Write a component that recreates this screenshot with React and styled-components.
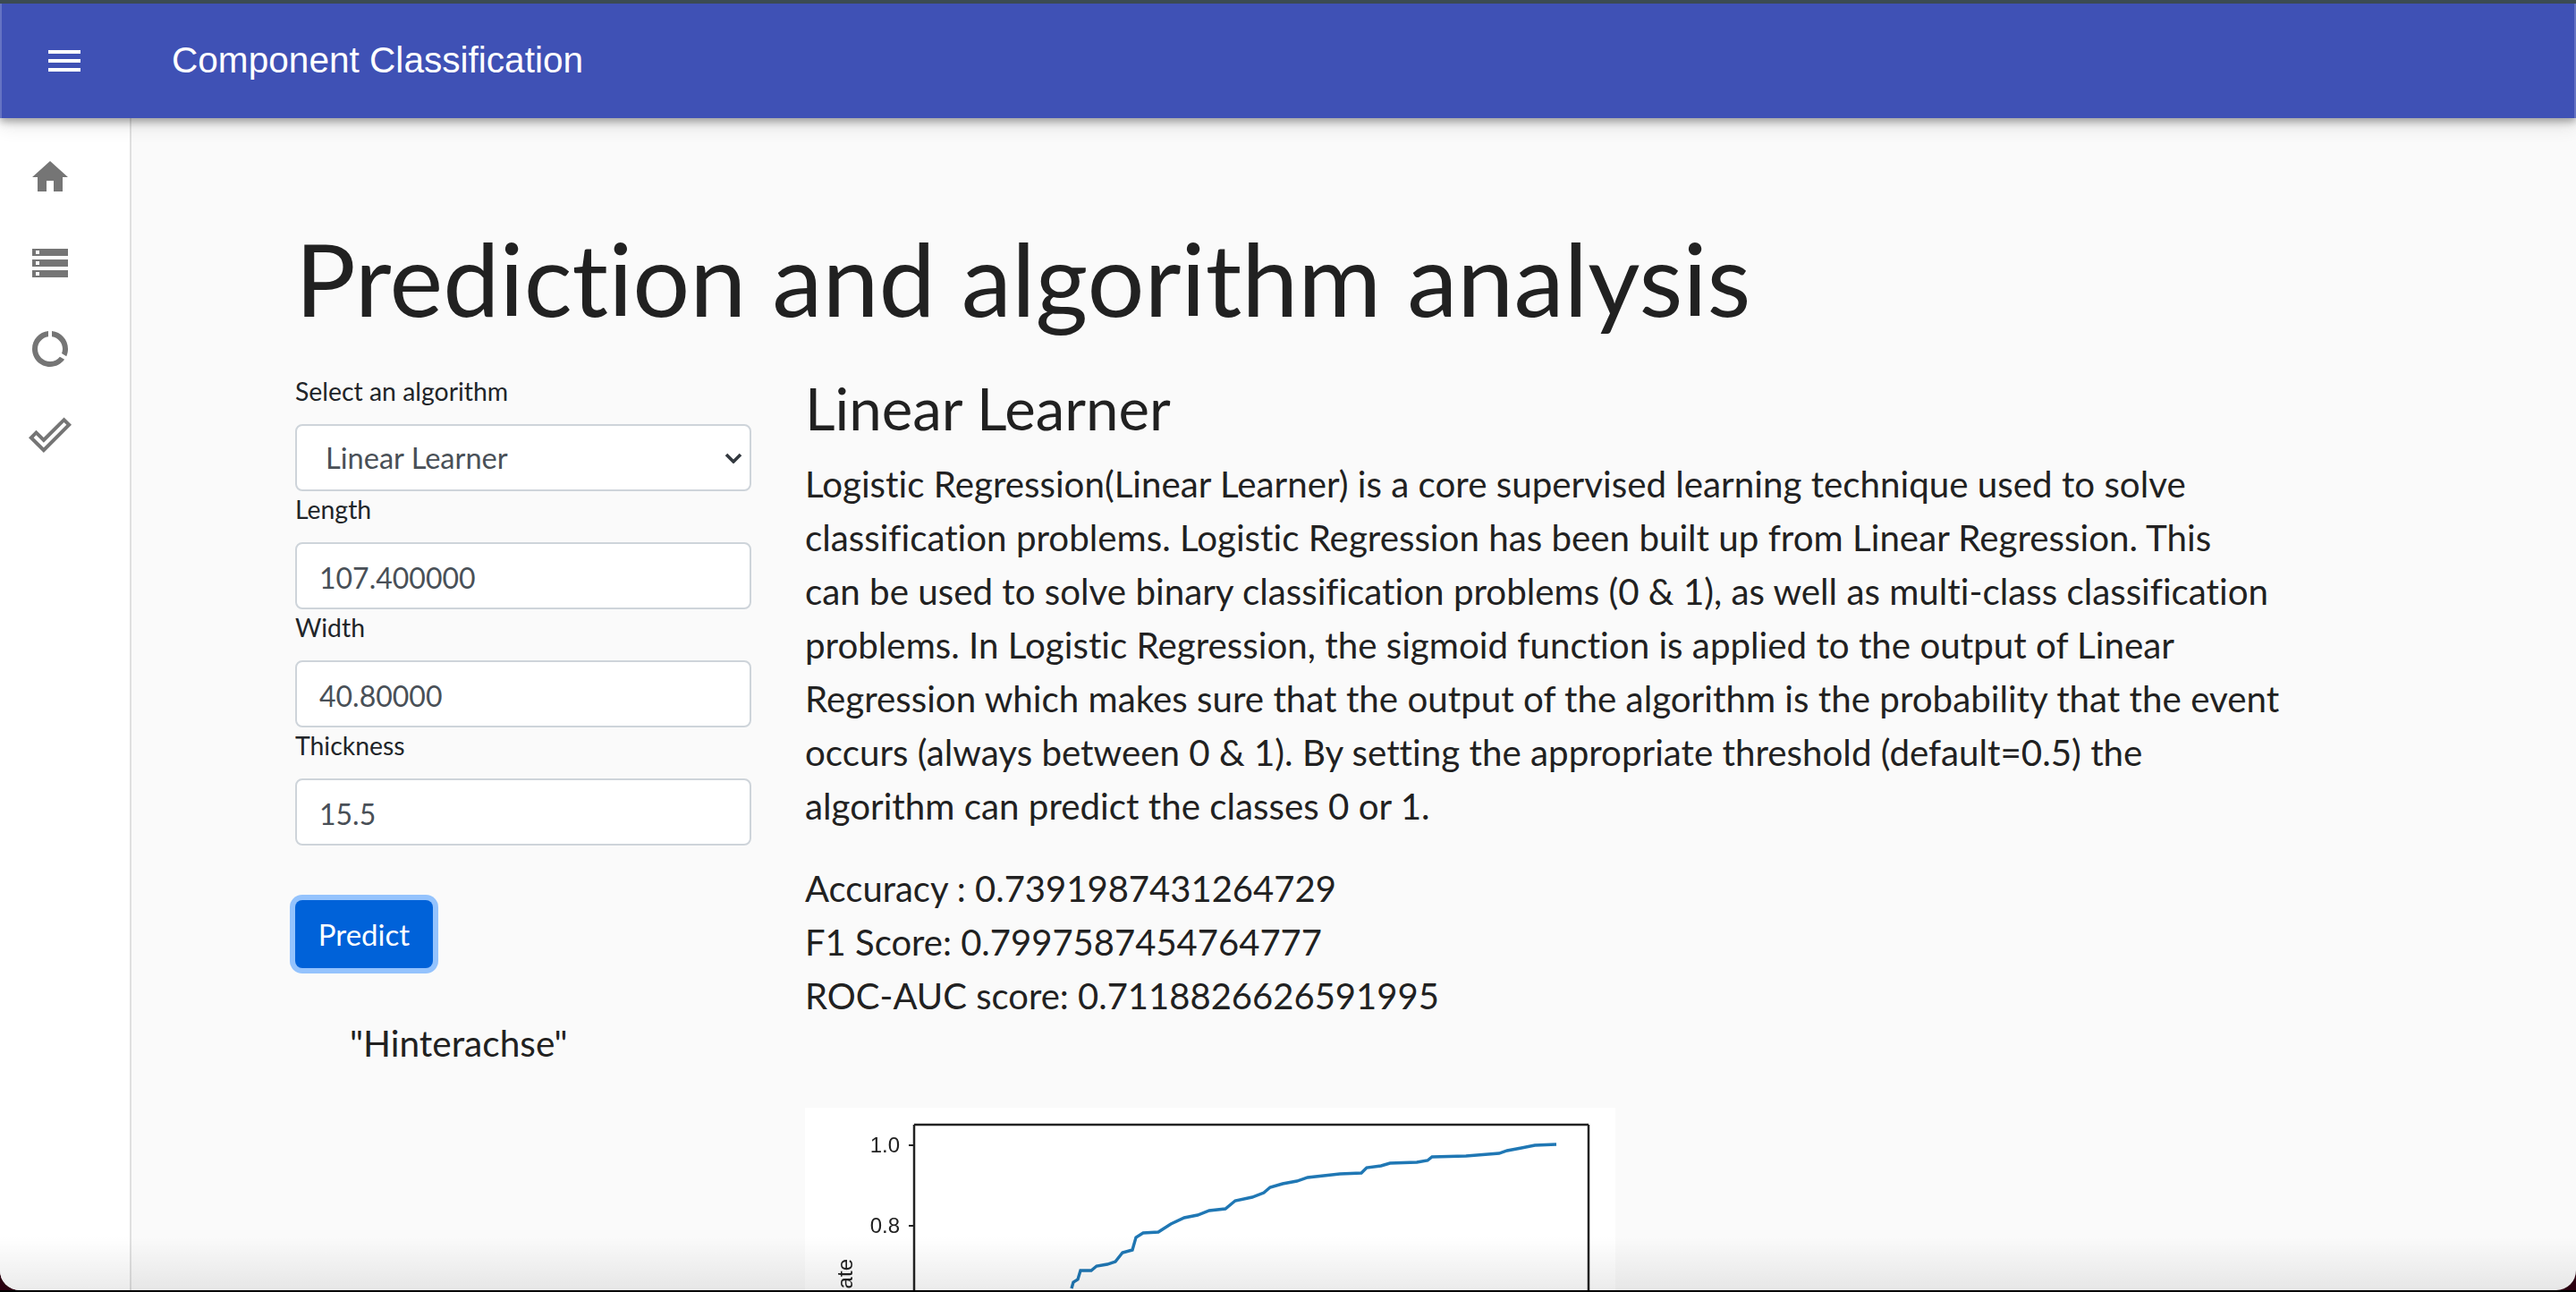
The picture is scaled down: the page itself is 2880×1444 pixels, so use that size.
import React from 'react';
import styled, { createGlobalStyle } from 'styled-components';
import { MdHome, MdStorage, MdDataUsage, MdDoneOutline } from 'react-icons/md';

const GlobalStyle = createGlobalStyle`
  html, body {
    margin: 0;
    padding: 0;
    height: 100%;
    background: #2b0010;
    overflow: hidden;
  }
  * {
    box-sizing: border-box;
  }
`;

const descriptionLines = [
  'Logistic Regression(Linear Learner) is a core supervised learning technique used to solve',
  'classification problems. Logistic Regression has been built up from Linear Regression. This',
  'can be used to solve binary classification problems (0 & 1), as well as multi-class classification',
  'problems. In Logistic Regression, the sigmoid function is applied to the output of Linear',
  'Regression which makes sure that the output of the algorithm is the probability that the event',
  'occurs (always between 0 & 1). By setting the appropriate threshold (default=0.5) the',
  'algorithm can predict the classes 0 or 1.',
];

const fields = [
  { label: 'Length', value: '107.400000' },
  { label: 'Width', value: '40.80000' },
  { label: 'Thickness', value: '15.5' },
];

const scores = [
  'Accuracy : 0.7391987431264729',
  'F1 Score: 0.7997587454764777',
  'ROC-AUC score: 0.7118826626591995',
];

const curve =
  '298,202 300,195 305,192 308,182 320,182 326,177 338,175 347,172 355,162 366,159 370,145 378,140 395,139 409,130 424,123 439,120 452,115 470,113 481,104 500,100 513,95 520,89 534,85 550,82 562,78 580,76 598,74 622,73 628,67 644,65 654,62 684,61 696,59 701,55 739,54 776,51 785,48 801,45 816,42 840,41';

const chevron =
  "url(\"data:image/svg+xml,%3Csvg xmlns='http://www.w3.org/2000/svg' viewBox='0 0 20 12'%3E%3Cpath d='M2 2l8 8 8-8' fill='none' stroke='%23343a40' stroke-width='3.6'/%3E%3C/svg%3E\")";

const App = () => {
  return (
    <Frame>
      <GlobalStyle />
      <Screen>
        <AppBar>
          <MenuIcon viewBox="0 0 36 24">
            <path d="M0 0h36v4H0zM0 10h36v4H0zM0 20h36v4H0z" />
          </MenuIcon>
          <AppTitle>Component Classification</AppTitle>
        </AppBar>
        <Body>
          <Sidebar>
            <NavItem><MdHome /></NavItem>
            <NavItem><MdStorage /></NavItem>
            <NavItem><MdDataUsage /></NavItem>
            <NavItem><MdDoneOutline /></NavItem>
          </Sidebar>
          <Main>
            <PageTitle>Prediction and algorithm analysis</PageTitle>
            <Columns>
              <FormColumn>
                <FieldLabel>Select an algorithm</FieldLabel>
                <Select defaultValue="Linear Learner">
                  <option>Linear Learner</option>
                </Select>
                {fields.map((field) => (
                  <React.Fragment key={field.label}>
                    <FieldLabel>{field.label}</FieldLabel>
                    <Input defaultValue={field.value} />
                  </React.Fragment>
                ))}
                <PredictButton>Predict</PredictButton>
                <Result>"Hinterachse"</Result>
              </FormColumn>
              <DetailColumn>
                <AlgorithmTitle>Linear Learner</AlgorithmTitle>
                <Description>
                  {descriptionLines.map((line) => (
                    <span key={line}>{line}</span>
                  ))}
                </Description>
                <Scores>
                  {scores.map((score) => (
                    <div key={score}>{score}</div>
                  ))}
                </Scores>
                <Plot viewBox="0 0 906 300">
                  <rect width="906" height="300" fill="#fff" />
                  <path d="M122 19H876M122 19V300M876 19V300" fill="none" stroke="#222" strokeWidth="2.5" />
                  <path d="M116 42h6M116 132h6" stroke="#222" strokeWidth="2" />
                  <PlotLabel x="106" y="50" textAnchor="end">1.0</PlotLabel>
                  <PlotLabel x="106" y="140" textAnchor="end">0.8</PlotLabel>
                  <PlotLabel x="-169" y="53" textAnchor="end" transform="rotate(-90)">ate</PlotLabel>
                  <polyline points={curve} fill="none" stroke="#1f77b4" strokeWidth="3.4" />
                </Plot>
              </DetailColumn>
            </Columns>
          </Main>
        </Body>
        <BottomShade />
      </Screen>
    </Frame>
  );
};

const Frame = styled.div`
  width: 2880px;
  height: 1444px;
  border-bottom: 2px solid #000;
`;

const Screen = styled.div`
  position: relative;
  display: flex;
  flex-direction: column;
  width: 2880px;
  height: 1442px;
  overflow: hidden;
  background: #fafafa;
  border-radius: 0 0 22px 22px;
  font-family: Lato, sans-serif;
  font-variant-ligatures: none;
  color: #212529;
`;

const AppBar = styled.header`
  position: relative;
  z-index: 2;
  display: flex;
  align-items: center;
  flex: none;
  height: 132px;
  padding-left: 54px;
  background: #3f51b5;
  border-top: 4px solid #3b4b52;
  box-shadow: inset 2px 0 rgba(255, 255, 255, 0.2), inset -2px 0 rgba(255, 255, 255, 0.2),
    0 4px 8px rgba(0, 0, 0, 0.3), 0 8px 20px rgba(0, 0, 0, 0.12);
`;

const MenuIcon = styled.svg`
  width: 36px;
  height: 24px;
  fill: #fff;
`;

const AppTitle = styled.h1`
  margin: 0 0 2px 102px;
  font-family: 'Liberation Sans', Arial, sans-serif;
  font-size: 40.6px;
  font-weight: 400;
  color: #fff;
`;

const Body = styled.div`
  display: flex;
  flex: 1;
  min-height: 0;
`;

const Sidebar = styled.nav`
  display: flex;
  flex-direction: column;
  flex: none;
  width: 147px;
  padding-top: 18px;
  background: #fff;
  border-right: 2px solid #e0e0e0;
`;

const NavItem = styled.div`
  display: flex;
  align-items: center;
  justify-content: center;
  width: 112px;
  height: 96px;
  color: #757575;

  svg {
    width: 48px;
    height: 48px;
  }
`;

const Main = styled.main`
  flex: 1;
  min-width: 0;
  padding: 0 0 0 183px;
`;

const PageTitle = styled.h2`
  margin: 111px 0 0;
  font-size: 113px;
  font-weight: 400;
  line-height: 134px;
  color: #212121;
`;

const Columns = styled.div`
  display: flex;
  margin-top: 40px;
`;

const FormColumn = styled.div`
  display: flex;
  flex-direction: column;
  align-items: flex-start;
  flex: none;
  width: 570px;
`;

const FieldLabel = styled.label`
  display: block;
  height: 57px;
  font-size: 28.4px;
  line-height: 40px;
`;

const controlStyle = `
  display: block;
  width: 510px;
  height: 75px;
  font-family: Lato, sans-serif;
  font-size: 32px;
  color: #495057;
  background-color: #fff;
  border: 2px solid #ced4da;
  border-radius: 8px;
  outline: none;
`;

const Select = styled.select`
  ${controlStyle}
  appearance: none;
  padding-left: 32px;
  font-size: 32.6px;
  background-image: ${chevron};
  background-repeat: no-repeat;
  background-position: right 8px center;
  background-size: 20px 12px;
`;

const Input = styled.input`
  ${controlStyle}
  padding: 3px 0 0 25px;
`;

const PredictButton = styled.button`
  width: 154px;
  height: 76px;
  margin-top: 61px;
  font-family: Lato, sans-serif;
  font-size: 33px;
  color: #fff;
  background: #0062d9;
  border: none;
  border-radius: 8px;
  box-shadow: 0 0 0 6px #94c3fd;
`;

const Result = styled.div`
  margin: 54px 0 0 61px;
  font-size: 40.6px;
  line-height: 60px;
  color: #212121;
`;

const DetailColumn = styled.div`
  width: 1670px;
`;

const AlgorithmTitle = styled.h3`
  margin: 0;
  font-size: 65.4px;
  font-weight: 400;
  line-height: 77px;
  color: #212121;
`;

const Description = styled.p`
  margin: 17px 0 0;
  font-size: 40.3px;
  line-height: 60px;
  color: #212121;

  span {
    display: block;
    white-space: nowrap;
  }
`;

const Scores = styled.div`
  margin-top: 32px;
  font-size: 40px;
  line-height: 60px;
  color: #212121;
`;

const Plot = styled.svg`
  display: block;
  width: 906px;
  height: 300px;
  margin-top: 95px;
  filter: blur(0.7px);
`;

const PlotLabel = styled.text`
  font-family: 'Liberation Sans', sans-serif;
  font-size: 24px;
  fill: #222;
`;

const BottomShade = styled.div`
  position: absolute;
  z-index: 3;
  left: 0;
  right: 0;
  bottom: 0;
  height: 60px;
  background: linear-gradient(rgba(0, 0, 0, 0), rgba(0, 0, 0, 0.08));
  pointer-events: none;
`;

export default App;
